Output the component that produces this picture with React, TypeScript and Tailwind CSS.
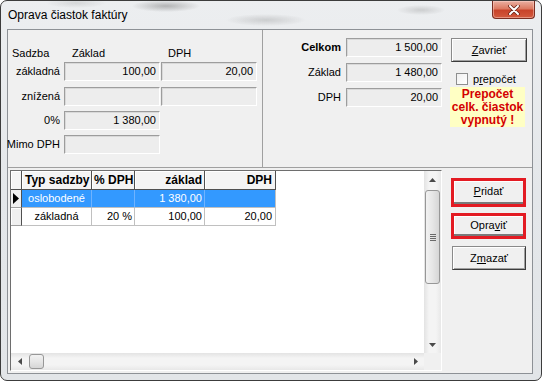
import React from 'react';

const fieldCls =
  'h-[19px] w-[96px] shrink-0 border border-t-[#9d9d9d] border-l-[#9d9d9d] border-r-white border-b-white bg-[#ededed] pr-[3px] text-right leading-[17px] shadow-[inset_1px_1px_0_#d9d9d9]';

function Field({ value = '' }: { value?: string }) {
  return <div className={fieldCls}>{value}</div>;
}

function Arrow({ dir }: { dir: 'up' | 'down' | 'left' | 'right' }) {
  const pts = {
    up: '0,4 3.5,0 7,4',
    down: '0,0 7,0 3.5,4',
    left: '4,0 4,7 0,3.5',
    right: '0,0 4,3.5 0,7',
  }[dir];
  const vertical = dir === 'up' || dir === 'down';
  return (
    <svg width={vertical ? 7 : 4} height={vertical ? 4 : 7} viewBox={vertical ? '0 0 7 4' : '0 0 4 7'}>
      <polygon points={pts} fill="#4a4a4a" />
    </svg>
  );
}

function ClassicButton({ children, className = '' }: { children: React.ReactNode; className?: string }) {
  return (
    <div
      className={`flex items-center justify-center border border-t-[#8a8a8a] border-l-[#8a8a8a] border-r-[#3c3c3c] border-b-[#3c3c3c] bg-[#f0f0f0] shadow-[inset_1px_1px_0_#ffffff,inset_-1px_-1px_0_#a0a0a0] ${className}`}
    >
      {children}
    </div>
  );
}

function RedButton({ children, h }: { children: React.ReactNode; h: string }) {
  return (
    <div className={`${h} w-[75px] border-[3px] border-[#e31b23] bg-[#f0f0f0]`}>
      <div className="flex h-full items-center justify-center border-b-2 border-b-[#7a7a7a] bg-[#f0f0f0] shadow-[inset_1px_1px_0_#ffffff]">
        {children}
      </div>
    </div>
  );
}

const headCell =
  'flex h-[19px] shrink-0 items-center whitespace-nowrap border-r border-b border-r-[#505050] border-b-[#505050] bg-[#f4f4f4] text-[12px] font-bold shadow-[inset_1px_1px_0_#ffffff]';

export default function App() {
  return (
    <div className="h-[381px] w-[542px] overflow-hidden bg-white">
      <div className="flex h-[381px] w-[542px] flex-col rounded-[7px] border border-[#3c3c3c] bg-[linear-gradient(180deg,#eceef0_0%,#e4e7ea_50%,#e2e5e8_100%)] font-['Liberation_Sans',Arial,sans-serif] text-[11px] text-black">
        {/* title bar */}
        <div className="flex h-[28px] shrink-0 items-start justify-between rounded-t-[6px] bg-[radial-gradient(ellipse_34px_6px_at_165px_5px,rgba(70,70,70,0.35),transparent),radial-gradient(ellipse_40px_6px_at_265px_19px,rgba(110,110,110,0.25),transparent),radial-gradient(ellipse_24px_5px_at_420px_9px,rgba(110,110,110,0.25),transparent),radial-gradient(ellipse_30px_5px_at_75px_2px,rgba(120,120,120,0.2),transparent)]">
          <div className="pl-[7px] pt-[7px] text-[12px] leading-[14px]">Oprava čiastok faktúry</div>
          <div className="mr-[6px] flex h-[18px] w-[43px] items-center justify-center rounded-b-[4px] border border-t-0 border-[#7a2e22] bg-[linear-gradient(180deg,#eab0a2_0%,#dc7a62_45%,#c8432a_55%,#d35a3e_100%)] shadow-[inset_0_0_0_1px_rgba(255,220,210,0.45)]">
            <svg width="12" height="10" viewBox="0 0 12 10">
              <path d="M2 1 L10 9 M10 1 L2 9" stroke="#6a2418" strokeWidth="3.6" strokeLinecap="round" />
              <path d="M2 1 L10 9 M10 1 L2 9" stroke="#ffffff" strokeWidth="2" strokeLinecap="round" />
            </svg>
          </div>
        </div>

        {/* client area */}
        <div className="ml-[6px] mr-[8px] flex h-[345px] shrink-0 flex-col border border-[#8d9196] bg-[#f0f0f0]">
          {/* top panel */}
          <div className="flex h-[138px] shrink-0 border-b border-b-[#a0a0a0]">
            {/* rates */}
            <div className="w-[255px] shrink-0 border-r border-r-[#a0a0a0] pl-[4px] pt-[15px]">
              <div className="flex h-[16px] items-center leading-[16px]">
                <div className="w-[52px]">Sadzba</div>
                <div className="w-[97px] pl-[8px]">Základ</div>
                <div className="pl-[7px]">DPH</div>
              </div>
              {[
                { label: 'základná', base: '100,00', vat: '20,00', two: true, mt: 'mt-[1px]' },
                { label: 'znížená', base: '', vat: '', two: true, mt: 'mt-[6px]' },
                { label: '0%', base: '1 380,00', two: false, mt: 'mt-[5px]' },
                { label: 'Mimo DPH', base: '', two: false, mt: 'mt-[5px]' },
              ].map((r) => (
                <div key={r.label} className={`flex items-center ${r.mt}`}>
                  <div className="flex w-[48px] justify-end whitespace-nowrap">{r.label}</div>
                  <div className="ml-[4px]">
                    <Field value={r.base} />
                  </div>
                  {r.two && (
                    <div className="ml-[1px]">
                      <Field value={r.vat} />
                    </div>
                  )}
                </div>
              ))}
            </div>

            {/* totals */}
            <div className="flex flex-1 pt-[8px]">
              <div className="w-[179px] shrink-0">
                {[
                  { label: 'Celkom', value: '1 500,00', bold: true, mt: '' },
                  { label: 'Základ', value: '1 480,00', bold: false, mt: 'mt-[6px]' },
                  { label: 'DPH', value: '20,00', bold: false, mt: 'mt-[6px]' },
                ].map((r) => (
                  <div key={r.label} className={`flex items-center ${r.mt}`}>
                    <div className={`w-[78px] text-right ${r.bold ? 'font-bold' : ''}`}>{r.label}</div>
                    <div className="ml-[5px]">
                      <Field value={r.value} />
                    </div>
                  </div>
                ))}
              </div>
              <div className="ml-[9px] w-[76px] shrink-0">
                <ClassicButton className="h-[24px] w-[76px]">
                  <span>
                    <u>Z</u>avrieť
                  </span>
                </ClassicButton>
                <div className="ml-[5px] mt-[11px] flex h-[12px] items-center">
                  <div className="h-[12px] w-[12px] border border-[#8e8f8f] bg-[linear-gradient(135deg,#f0f0f0,#ffffff)]" />
                  <span className="ml-[5px]">
                    p<u>r</u>epočet
                  </span>
                </div>
                <div className="-ml-[1px] mt-[2px] flex h-[40px] w-[75px] flex-col items-center justify-center bg-[#ffffc4] text-[12px] font-bold leading-[13px] text-[#d40000]">
                  <div>Prepočet</div>
                  <div>celk. čiastok</div>
                  <div>vypnutý !</div>
                </div>
              </div>
            </div>
          </div>

          {/* bottom: grid + buttons */}
          <div className="flex flex-1">
            <div className="ml-[2px] mt-[2px] flex h-[201px] w-[432px] shrink-0 flex-col border border-t-[#6e6e6e] border-l-[#6e6e6e] border-r-white border-b-white">
              <div className="flex h-[182px] shrink-0">
                {/* table */}
                <div className="flex-1 bg-white">
                  <div className="flex">
                    <div className={`${headCell} w-[11px]`} />
                    <div className={`${headCell} w-[70px] pl-[3px]`}>Typ sadzby</div>
                    <div className={`${headCell} w-[43px] pl-[2px]`}>% DPH</div>
                    <div className={`${headCell} w-[70px] justify-end pr-[2px]`}>základ</div>
                    <div className={`${headCell} w-[71px] justify-end pr-[3px]`}>DPH</div>
                  </div>
                  <div className="flex h-[18px]">
                    <div className="flex w-[11px] shrink-0 items-center justify-center border-r border-b border-r-[#505050] border-b-[#a0a0a0] bg-[#f0f0f0]">
                      <svg width="6" height="11" viewBox="0 0 6 11">
                        <polygon points="0,0 6,5.5 0,11" fill="#000" />
                      </svg>
                    </div>
                    <div className="flex w-[70px] shrink-0 items-center justify-center border-r border-b border-r-[#6fb3ff] border-b-[#c0c0c0] bg-[#3399ff] text-white">
                      oslobodené
                    </div>
                    <div className="w-[43px] shrink-0 border-r border-b border-r-[#6fb3ff] border-b-[#c0c0c0] bg-[#3399ff]" />
                    <div className="flex w-[70px] shrink-0 items-center justify-end border-r border-b border-r-[#6fb3ff] border-b-[#c0c0c0] bg-[#3399ff] pr-[2px] text-white">
                      1 380,00
                    </div>
                    <div className="w-[71px] shrink-0 border-r border-b border-r-[#c0c0c0] border-b-[#c0c0c0] bg-[#3399ff]" />
                  </div>
                  <div className="flex h-[18px]">
                    <div className="w-[11px] shrink-0 border-r border-b border-r-[#505050] border-b-[#a0a0a0] bg-[#f0f0f0] shadow-[inset_1px_1px_0_#ffffff]" />
                    <div className="flex w-[70px] shrink-0 items-center justify-center border-r border-b border-[#c0c0c0]">
                      základná
                    </div>
                    <div className="flex w-[43px] shrink-0 items-center justify-end border-r border-b border-[#c0c0c0] pr-[2px]">
                      20 %
                    </div>
                    <div className="flex w-[70px] shrink-0 items-center justify-end border-r border-b border-[#c0c0c0] pr-[2px]">
                      100,00
                    </div>
                    <div className="flex w-[71px] shrink-0 items-center justify-end border-r border-b border-[#c0c0c0] pr-[3px]">
                      20,00
                    </div>
                  </div>
                </div>
                {/* vertical scrollbar */}
                <div className="flex w-[17px] shrink-0 flex-col bg-[linear-gradient(90deg,#e3e3e3,#f4f4f4_30%,#f4f4f4_70%,#e8e8e8)]">
                  <div className="flex h-[17px] items-center justify-center">
                    <Arrow dir="up" />
                  </div>
                  <div className="mx-[1px] mt-[2px] flex h-[94px] items-center justify-center rounded-[3px] border border-[#979797] bg-[linear-gradient(90deg,#f2f2f2,#e6e6e6_50%,#d6d6d6)]">
                    <div className="flex flex-col gap-[1px]">
                      <div className="h-px w-[6px] bg-[#6a6a6a]" />
                      <div className="h-px w-[6px] bg-[#6a6a6a]" />
                      <div className="h-px w-[6px] bg-[#6a6a6a]" />
                      <div className="h-px w-[6px] bg-[#6a6a6a]" />
                    </div>
                  </div>
                  <div className="flex-1" />
                  <div className="flex h-[17px] items-center justify-center">
                    <Arrow dir="down" />
                  </div>
                </div>
              </div>
              {/* horizontal scrollbar */}
              <div className="flex h-[17px] shrink-0">
                <div className="flex flex-1 items-center bg-[linear-gradient(180deg,#e3e3e3,#f4f4f4_30%,#f4f4f4_70%,#e8e8e8)]">
                  <div className="flex h-[17px] w-[17px] items-center justify-center">
                    <Arrow dir="left" />
                  </div>
                  <div className="ml-[1px] h-[15px] w-[15px] rounded-[3px] border border-[#979797] bg-[linear-gradient(180deg,#f2f2f2,#e6e6e6_50%,#d6d6d6)]" />
                  <div className="flex-1" />
                  <div className="flex h-[17px] w-[17px] items-center justify-center">
                    <Arrow dir="right" />
                  </div>
                </div>
                <div className="w-[17px] bg-[#f0f0f0]" />
              </div>
            </div>

            {/* action buttons */}
            <div className="ml-[9px] flex w-[75px] shrink-0 flex-col pt-[10px]">
              <RedButton h="h-[29px]">
                <span>
                  <u>P</u>ridať
                </span>
              </RedButton>
              <div className="mt-[6px]">
                <RedButton h="h-[26px]">
                  <span>
                    Opra<u>v</u>iť
                  </span>
                </RedButton>
              </div>
              <ClassicButton className="ml-[1px] mt-[7px] h-[24px] w-[74px]">
                <span>
                  Z<u>m</u>azať
                </span>
              </ClassicButton>
            </div>
          </div>
        </div>
      </div>
    </div>
  );
}
